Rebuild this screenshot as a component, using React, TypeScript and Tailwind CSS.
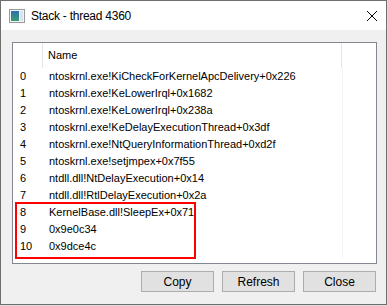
import React from "react";

const rows = [
  "ntoskrnl.exe!KiCheckForKernelApcDelivery+0x226",
  "ntoskrnl.exe!KeLowerIrql+0x1682",
  "ntoskrnl.exe!KeLowerIrql+0x238a",
  "ntoskrnl.exe!KeDelayExecutionThread+0x3df",
  "ntoskrnl.exe!NtQueryInformationThread+0xd2f",
  "ntoskrnl.exe!setjmpex+0x7f55",
  "ntdll.dll!NtDelayExecution+0x14",
  "ntdll.dll!RtlDelayExecution+0x2a",
  "KernelBase.dll!SleepEx+0x71",
  "0x9e0c34",
  "0x9dce4c",
];

export default function App() {
  return (
    <div className="w-[388px] h-[306px] bg-[#dcdcdc] overflow-hidden" style={{ fontFamily: '"Liberation Sans", Arial, sans-serif' }}>
      <div className="w-[387px] h-[305px] border border-[#6f6f6f] flex flex-col bg-[#f0f0f0]">
        <div className="h-[29px] bg-white flex items-center shrink-0">
          <svg width="16" height="14" viewBox="0 0 16 14" className="ml-[8px] mr-[6px]">
            <rect x="0.5" y="0.5" width="15" height="13" fill="#f4f4f4" stroke="#9a9a9a" />
            <defs>
              <linearGradient id="g" x1="0" y1="0" x2="0" y2="1">
                <stop offset="0" stopColor="#2f6fb0" />
                <stop offset="1" stopColor="#3aa070" />
              </linearGradient>
            </defs>
            <rect x="2" y="2" width="8" height="10" fill="url(#g)" />
            <rect x="11" y="2" width="3" height="10" fill="#d8e4ec" />
          </svg>
          <span className="text-[12px] tracking-[-0.25px] text-black">Stack - thread 4360</span>
          <div className="flex-1" />
          <svg width="12" height="12" viewBox="0 0 12 12" className="mr-[8px]">
            <path d="M1 1 L11 11 M11 1 L1 11" stroke="#000" strokeWidth="1" />
          </svg>
        </div>
        <div className="flex-1 flex flex-col pl-[11px] pr-[10px] pt-[12px]">
          <div className="relative w-[365px] h-[222px] border border-[#828790] bg-white">
            <div className="flex h-[25px] text-[11px] text-black">
              <div className="w-[30px] border-r border-[#e5e5e5]" />
              <div className="w-[299px] border-r border-[#e5e5e5] flex items-center pl-[5px]">Name</div>
            </div>
            <div className="absolute left-[329px] top-[25px] bottom-[4px] w-px bg-[#f0f6fa]" />
            {rows.map((r, i) => (
              <div key={i} className="flex h-[17px] items-center text-[11px] text-black">
                <div className="w-[31px] pl-[7px]">{i}</div>
                <div className="pl-[5px] whitespace-nowrap">{r}</div>
              </div>
            ))}
            <div className="absolute left-[2px] top-[159px] w-[181px] h-[57px] border-2 border-[#ff0000]" />
          </div>
          <div className="flex justify-end gap-[8px] mt-[7px]">
            {["Copy", "Refresh", "Close"].map((b) => (
              <div key={b} className="w-[73px] h-[21px] bg-[#e1e1e1] border border-[#adadad] flex items-center justify-center text-[12px] text-black">
                {b}
              </div>
            ))}
          </div>
        </div>
      </div>
    </div>
  );
}
